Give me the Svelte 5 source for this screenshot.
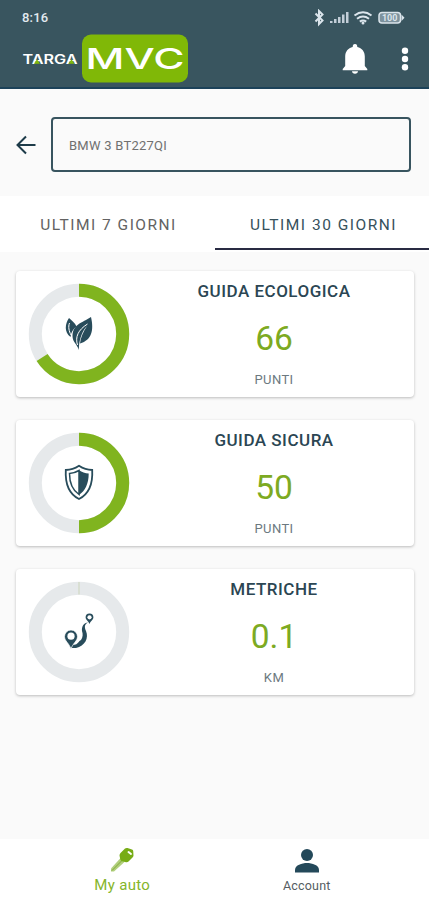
<script lang="ts">
    interface Card {
        title: string;
        value: string;
        unit: string;
        percent: number;
        icon: "leaf" | "shield" | "route";
    }

    const cards: Card[] = [
        { title: "GUIDA ECOLOGICA", value: "66", unit: "PUNTI", percent: 66, icon: "leaf" },
        { title: "GUIDA SICURA", value: "50", unit: "PUNTI", percent: 50, icon: "shield" },
        { title: "METRICHE", value: "0.1", unit: "KM", percent: 0, icon: "route" },
    ];

    let activeTab = $state(30);
</script>

<div class="app">
    <header>
        <div class="status">
            <span class="clock">8:16</span>
            <svg width="92" height="18" viewBox="0 0 92 18">
                <path d="M2.500 4.500l7 7L6 15V2l3.500 3.500-7 7" fill="none" stroke="#dbe5ec" stroke-width="2" />
                <path d="M17 14v-2h2.500v2zM21 14v-4h2.500v4zM25 14V8h2.500v6zM29 14V5.500h2.500V14zM33 14V3h2.500v11z" fill="#c3ced8" />
                <g fill="none" stroke="#dbe5ec" stroke-width="2">
                    <path d="M41.500 6.500q8.500-6.500 17 0" />
                    <path d="M44 9.800q6-4.500 12 0" />
                    <path d="M46.800 12.600q3.200-2.300 6.400 0" />
                </g>
                <circle cx="50" cy="14" r="1.500" fill="#dbe5ec" />
                <rect x="66" y="3.500" width="21.500" height="10.500" rx="3" fill="#7d929d" stroke="#dbe5ec" stroke-width="1.500" />
                <path d="M88.500 5.500l3 3.200-3 3.200z" fill="#dbe5ec" />
                <text x="76.700" y="12" text-anchor="middle" class="battery">100</text>
            </svg>
        </div>
        <div class="toolbar">
            <svg class="logo" width="168" height="50" viewBox="0 0 168 50">
                <text x="0.500" y="29.500" class="targa" textLength="55" lengthAdjust="spacingAndGlyphs">TARGA</text>
                <path d="M12 29.700l3-4.500 3 4.500zM46.500 29.700l3-4.500 3 4.500z" fill="#80b80b" />
                <rect x="60" y="0.500" width="106" height="48" rx="9" fill="#80b807" />
                <text x="63.500" y="34.500" class="mvc" textLength="99" lengthAdjust="spacingAndGlyphs">MVC</text>
            </svg>
            <svg class="bell" width="26" height="31" viewBox="0 0 26 31">
                <path d="M13 0c1.700 0 2.300 1.200 2.300 3 4.700 1.200 7.500 4.600 7.500 9.500V22l2.500 3v1.200H.7V25l2.500-3v-9.500C3.200 7.600 6 4.200 10.700 3c0-1.800.6-3 2.300-3zM10 27.200h6c0 1.600-1.300 2.500-3 2.500s-3-.9-3-2.500z" fill="#fff" />
            </svg>
            <svg class="more" width="8" height="24" viewBox="0 0 8 24">
                <circle cx="4" cy="3.700" r="3.200" fill="#fff" />
                <circle cx="4" cy="12" r="3.200" fill="#fff" />
                <circle cx="4" cy="20.300" r="3.200" fill="#fff" />
            </svg>
        </div>
    </header>

    <div class="vehicle">
        <svg width="20" height="20" viewBox="0 0 20 20">
            <path d="M19.500 10H2M10 1.500L1.500 10l8.500 8.500" fill="none" stroke="#1d3b49" stroke-width="2" />
        </svg>
        <div class="plate">BMW 3 BT227QI</div>
    </div>

    <div class="tabs">
        <button class="tab" class:active={activeTab === 7} onclick={() => (activeTab = 7)}>ULTIMI 7 GIORNI</button>
        <button class="tab month" class:active={activeTab === 30} onclick={() => (activeTab = 30)}>ULTIMI 30 GIORNI</button>
    </div>

    <main>
        {#each cards as card}
            <section class="card">
                <svg class="donut" width="102" height="102" viewBox="-51 -51 102 102">
                    <circle r="43.700" fill="none" stroke="#e6e9eb" stroke-width="13" />
                    {#if card.percent > 0}
                        <circle
                            r="43.700"
                            fill="none"
                            stroke="#80b41f"
                            stroke-width="13"
                            pathLength="100"
                            stroke-dasharray="{card.percent} 100"
                            transform="rotate(-90)"
                        />
                    {:else}
                        <path d="M0-50v12.500" stroke="#d5dbcb" stroke-width="1.500" />
                    {/if}
                    {#if card.icon === "leaf"}
                        <g fill="#284c5b">
                            <path d="M-10-16C-14-10-15-2-8.500 3c.5-5 3-8.500 6-10.500C-4-11-7-13-10-16z" />
                            <path d="M12-17C3-11-6-10-6.500 2c0 6 4.500 8 6.500 14C-.5 9 2-2 8-8 4-2 1.500 4 1 9.500 13 6 15-4 12-17z" />
                        </g>
                        <path d="M-9.500-11C-11-7-10-3-8 1M8.500-10C-1-4-4 3-1.500 11" fill="none" stroke="#fff" stroke-width="1" />
                    {:else if card.icon === "shield"}
                        <path d="M0-17.200C4-14.500 8-13 13.200-13 14 2 9 11.500 0 16-9 11.500-14 2-13.200-13-8-13-4-14.500 0-17.200z" fill="#fff" stroke="#284c5b" stroke-width="1.800" />
                        <path d="M0-12.500C-3-10.700-6-9.700-9.500-9.500-9.500 1-6 7.500 0 11.500z" fill="#fff" stroke="#284c5b" stroke-width="1.500" />
                        <path d="M0-12.700C3-10.700 6-9.700 9.700-9.500 9.700 1 6 8 0 12z" fill="#284c5b" />
                    {:else}
                        <path d="M9-9.500C5-7.500 5.500-4.500 7-1 10 6 6 14-3 16h-4c-1-1 0-2 1-3.500C-2 14-.5 9 2 8 4 5 4 2 3-1 2.500-6 5-9 9-9.500z" fill="#284c5b" />
                        <path d="M-8 17c-2-6-6.500-8-6.500-12.500a6.500 6.500 0 0 1 13 0C-1.500 9-6 11-8 17z" fill="#284c5b" stroke="#fff" stroke-width=".7" />
                        <circle cx="-8" cy="4.200" r="3.600" fill="#fff" />
                        <path d="M10.500-8c-1-3-3.900-4-3.900-6.700a3.900 3.900 0 0 1 7.800 0C14.400-12 11.500-11 10.500-8z" fill="#284c5b" />
                        <circle cx="10.500" cy="-14.700" r="2.100" fill="#fff" />
                    {/if}
                </svg>
                <div class="info">
                    <h2>{card.title}</h2>
                    <div class="value">{card.value}</div>
                    <div class="unit">{card.unit}</div>
                </div>
            </section>
        {/each}
    </main>

    <nav>
        <a href="#auto" class="auto">
            <svg width="26" height="26" viewBox="0 0 26 26">
                <path d="M2 21.500L11.500 11l4 4L5 24.500H2z" fill="#b1cf7d" />
                <path d="M3 23.500L13 13.500" stroke="#80aa35" stroke-width="1" />
                <path d="M11.500 6L16 1.500q1-.8 2.500-.5l4.500 1.500q1 .3 1.200 1.500l.3 4.500q0 1-1 2L19.500 14.500q-1 1-2.500.7l-4-1q-1.500-.3-1.700-1.700L10.500 8.500q0-1.500 1-2.500z" fill="#77ac16" />
                <path d="M19.500 5l2.500 2" stroke="#fff" stroke-width="2" stroke-linecap="round" />
            </svg>
            <span>My auto</span>
        </a>
        <a href="#account" class="account">
            <svg width="26" height="26" viewBox="0 0 26 26">
                <circle cx="13" cy="8" r="6" fill="#24495a" />
                <path d="M1 25.500V23C1 18 8 16 13 16s12 2 12 7v2.500z" fill="#24495a" />
            </svg>
            <span>Account</span>
        </a>
    </nav>
</div>

<style>
    :global(body) {
        background: #fafafa;
    }

    .app {
        height: 900px;
        display: flex;
        flex-direction: column;
        font-family: Roboto, "Liberation Sans", sans-serif;
        background: #fafafa;
        overflow: hidden;
    }

    header {
        box-sizing: border-box;
        height: 89px;
        background: #39555f;
        border-bottom: 2px solid #1c4259;
        flex-shrink: 0;
    }

    .status {
        height: 33px;
        padding: 1px 24px 0 22px;
        display: flex;
        align-items: center;
        justify-content: space-between;
    }

    .clock {
        font-size: 13px;
        font-weight: 500;
        letter-spacing: 0.2px;
        color: #e3eaf0;
    }

    .battery {
        font-size: 9px;
        font-weight: 700;
        fill: #dbe5ec;
    }

    .toolbar {
        display: flex;
        align-items: center;
        height: 50px;
        padding: 0 20px 0 22px;
    }

    .targa {
        font-family: Inter, sans-serif;
        font-size: 12.5px;
        font-weight: 600;
        fill: #fff;
    }

    .mvc {
        font-family: Inter, sans-serif;
        font-size: 28.5px;
        font-weight: 500;
        fill: #fff;
    }

    .bell {
        margin-left: auto;
    }

    .more {
        margin-left: 33px;
    }

    .vehicle {
        height: 107px;
        padding: 4px 18px 0 16px;
        box-sizing: border-box;
        display: flex;
        align-items: center;
        gap: 15px;
        flex-shrink: 0;
    }

    .plate {
        box-sizing: border-box;
        flex: 1;
        height: 55px;
        border: 2px solid #38545f;
        border-radius: 4px;
        padding-left: 16px;
        font-size: 13px;
        letter-spacing: 0.25px;
        line-height: 53px;
        color: #707070;
    }

    .tabs {
        display: flex;
        height: 56px;
        background: #fff;
        flex-shrink: 0;
    }

    .tab {
        flex: 0 0 215px;
        height: 54px;
        border: none;
        border-bottom: 2px solid transparent;
        background: none;
        padding: 6px 0 0 2px;
        font-family: inherit;
        font-size: 15.5px;
        letter-spacing: 1.5px;
        color: #626262;
        white-space: nowrap;
    }

    .tab.month {
        flex: 1;
        padding-left: 3px;
    }

    .tab.active {
        color: #36515c;
        border-bottom-color: #292b43;
    }

    main {
        flex: 1;
        padding: 19px 15px 0 16px;
        display: flex;
        flex-direction: column;
        gap: 23px;
    }

    .card {
        height: 126px;
        display: flex;
        background: #fff;
        border-radius: 4px;
        box-shadow: 0 1px 3px rgba(0, 0, 0, 0.25);
    }

    .donut {
        margin: 11.5px 0 0 12px;
        flex-shrink: 0;
    }

    .info {
        flex: 1;
        display: flex;
        flex-direction: column;
        align-items: center;
        padding-left: 4px;
    }

    h2 {
        margin: 10px 0 0;
        font-size: 17px;
        line-height: 20px;
        font-weight: 500;
        letter-spacing: 0.5px;
        color: #2b4653;
    }

    .value {
        margin-top: 18px;
        font-size: 33.5px;
        line-height: 40px;
        color: #7daa22;
    }

    .unit {
        margin-top: 13px;
        font-size: 13px;
        line-height: 16px;
        letter-spacing: 0.4px;
        color: #6c7980;
    }

    nav {
        height: 61px;
        display: flex;
        background: #fff;
        padding: 0 30px;
        flex-shrink: 0;
    }

    nav a {
        flex: 1;
        display: flex;
        flex-direction: column;
        align-items: center;
        padding-top: 8px;
        text-decoration: none;
    }

    .auto {
        font-size: 15px;
        letter-spacing: 0.3px;
        line-height: 24px;
        color: #85b52b;
    }

    .account {
        font-size: 12.5px;
        letter-spacing: 0.2px;
        line-height: 25px;
        color: #555d62;
    }
</style>
